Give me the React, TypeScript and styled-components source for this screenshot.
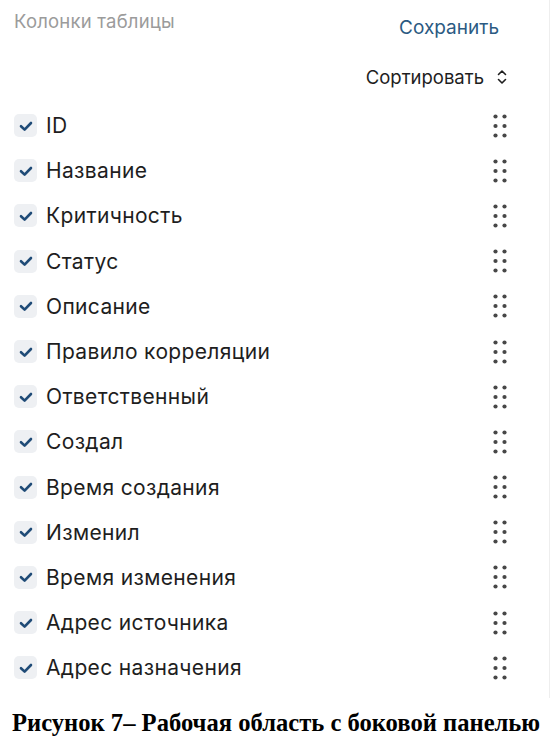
import React from "react";
import styled, { createGlobalStyle } from "styled-components";

const GlobalStyle = createGlobalStyle`
  html, body { margin: 0; padding: 0; background: #ffffff; }
  * { box-sizing: border-box; }
`;

const Page = styled.div`
  width: 551px;
  font-family: Inter, "Noto Sans", "Liberation Sans", sans-serif;
`;

const Panel = styled.div`
  width: 550px;
  height: 698px;
  border-right: 1px solid #eeeeee;
  padding: 9px 0 0 14px;
  display: flex;
  flex-direction: column;
`;

const Header = styled.div`
  display: flex;
  justify-content: space-between;
  align-items: flex-start;
  padding-right: 50px;
`;

const Title = styled.div`
  font-size: 18.5px;
  letter-spacing: 0.2px;
  color: #9b9b9b;
  line-height: 24px;
`;

const SaveButton = styled.button`
  border: none;
  background: none;
  padding: 0;
  margin-top: 7px;
  font-family: inherit;
  font-size: 19px;
  line-height: 24px;
  color: #2b5a82;
  cursor: pointer;
`;

const SortRow = styled.div`
  display: flex;
  justify-content: flex-end;
  align-items: center;
  gap: 13px;
  margin-top: 25px;
  padding-right: 42px;
  font-size: 18.5px;
  line-height: 24px;
  color: #1e1e1e;
`;

const List = styled.div`
  margin-top: 14px;
  display: flex;
  flex-direction: column;
`;

const Row = styled.div`
  height: 45.2px;
  display: flex;
  align-items: center;
  padding-right: 42px;
`;

const Box = styled.span`
  width: 23px;
  height: 23px;
  border-radius: 5px;
  background: #eef0f3;
  display: flex;
  align-items: center;
  justify-content: center;
  flex-shrink: 0;
`;

const Label = styled.span`
  margin-left: 9px;
  font-size: 21px;
  letter-spacing: 0.35px;
  color: #1e1e1e;
  flex: 1;
`;

const Caption = styled.div`
  font-family: "Liberation Serif", "Times New Roman", serif;
  font-weight: bold;
  font-size: 24.6px;
  line-height: 30px;
  color: #000;
  padding: 10px 0 0 12px;
`;

const Check = () => (
  <svg width="16" height="16" viewBox="0 0 16 16">
    <path d="M3 8.2 L6.6 11.6 L13 5" fill="none" stroke="#1f4b77" strokeWidth="2.6" strokeLinecap="round" strokeLinejoin="round" />
  </svg>
);

const Grip = () => (
  <svg width="14" height="24" viewBox="0 0 14 24">
    {[2.5, 12, 21.5].map((y) =>
      [2.5, 11.5].map((x) => <circle key={`${x}-${y}`} cx={x} cy={y} r="2.1" fill="#474747" />)
    )}
  </svg>
);

const UpDown = () => (
  <svg width="10" height="16" viewBox="0 0 10 16">
    <path d="M1.5 5.5 L5 2 L8.5 5.5 M1.5 10.5 L5 14 L8.5 10.5" fill="none" stroke="#1e1e1e" strokeWidth="1.6" strokeLinecap="round" strokeLinejoin="round" />
  </svg>
);

const columns = [
  "ID",
  "Название",
  "Критичность",
  "Статус",
  "Описание",
  "Правило корреляции",
  "Ответственный",
  "Создал",
  "Время создания",
  "Изменил",
  "Время изменения",
  "Адрес источника",
  "Адрес назначения",
];

export default function App() {
  return (
    <Page>
      <GlobalStyle />
      <Panel>
        <Header>
          <Title>Колонки таблицы</Title>
          <SaveButton>Сохранить</SaveButton>
        </Header>
        <SortRow>
          <span>Сортировать</span>
          <UpDown />
        </SortRow>
        <List>
          {columns.map((c) => (
            <Row key={c}>
              <Box>
                <Check />
              </Box>
              <Label>{c}</Label>
              <Grip />
            </Row>
          ))}
        </List>
      </Panel>
      <Caption>Рисунок 7– Рабочая область с боковой панелью</Caption>
    </Page>
  );
}
